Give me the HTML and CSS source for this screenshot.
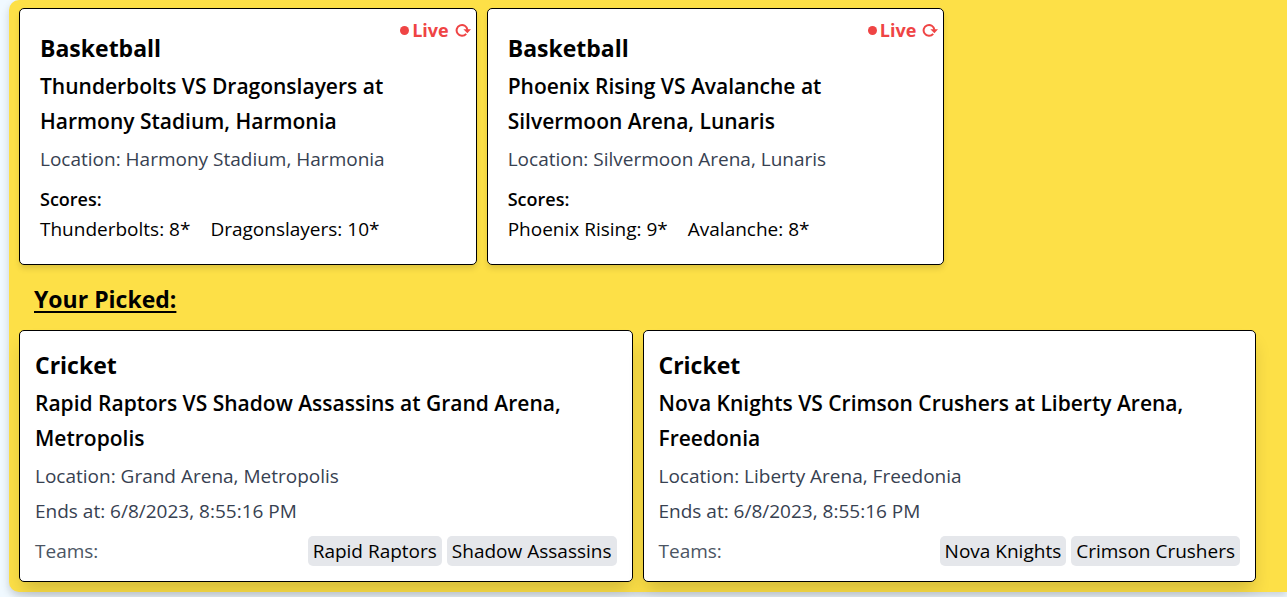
FILE: index.html
```html
<!DOCTYPE html>
<html lang="en">
<head>
<meta charset="utf-8">
<meta name="viewport" content="width=device-width, initial-scale=1">
<title>Matches</title>
<link rel="stylesheet" href="styles.css">
</head>
<body>
<main class="panel">
  <section class="live-list">
    <article class="card live-card">
      <p class="live"><span class="dot"></span>Live
        <button class="refresh" type="button" aria-label="Refresh score"><svg viewBox="0 0 16 14"><path d="M11.2 10.8A5.4 5.4 0 1 1 12.4 6.8"/><path class="head" d="M8.4 6.2H16l-3.6 4z"/></svg></button></p>
      <h2 class="sport">Basketball</h2>
      <h3 class="title">Thunderbolts VS Dragonslayers at Harmony Stadium, Harmonia</h3>
      <p class="meta">Location: Harmony Stadium, Harmonia</p>
      <h4 class="scores-label">Scores:</h4>
      <div class="scores"><span>Thunderbolts: 8*</span><span>Dragonslayers: 10*</span></div>
    </article>
    <article class="card live-card">
      <p class="live"><span class="dot"></span>Live
        <button class="refresh" type="button" aria-label="Refresh score"><svg viewBox="0 0 16 14"><path d="M11.2 10.8A5.4 5.4 0 1 1 12.4 6.8"/><path class="head" d="M8.4 6.2H16l-3.6 4z"/></svg></button></p>
      <h2 class="sport">Basketball</h2>
      <h3 class="title">Phoenix Rising VS Avalanche at Silvermoon Arena, Lunaris</h3>
      <p class="meta">Location: Silvermoon Arena, Lunaris</p>
      <h4 class="scores-label">Scores:</h4>
      <div class="scores"><span>Phoenix Rising: 9*</span><span>Avalanche: 8*</span></div>
    </article>
  </section>
  <h2 class="section-title">Your Picked:</h2>
  <section class="picked-list">
    <article class="card picked-card">
      <h2 class="sport">Cricket</h2>
      <h3 class="title">Rapid Raptors VS Shadow Assassins at Grand Arena, Metropolis</h3>
      <p class="meta">Location: Grand Arena, Metropolis</p>
      <p class="meta">Ends at: 6/8/2023, 8:55:16 PM</p>
      <div class="teams"><span class="teams-label">Teams:</span><span class="team">Rapid Raptors</span><span class="team">Shadow Assassins</span></div>
    </article>
    <article class="card picked-card">
      <h2 class="sport">Cricket</h2>
      <h3 class="title">Nova Knights VS Crimson Crushers at Liberty Arena, Freedonia</h3>
      <p class="meta">Location: Liberty Arena, Freedonia</p>
      <p class="meta">Ends at: 6/8/2023, 8:55:16 PM</p>
      <div class="teams"><span class="teams-label">Teams:</span><span class="team">Nova Knights</span><span class="team">Crimson Crushers</span></div>
    </article>
  </section>
</main>
</body>
</html>
```

FILE: styles.css
```css
* { box-sizing: border-box; }
body {
  margin: 0;
  padding: 0 0 5px 9px;
  background: #f0f9ff;
  color: #000;
  font: 19px/30px "Segoe UI", "Open Sans", "Noto Sans", sans-serif;
}
h2, h3, h4, p { margin: 0; }
.panel {
  padding: 8px 31px 10px 10px;
  background: #fde047;
  border-radius: 10px 0 0 10px;
  box-shadow: 0 4px 8px rgba(0, 0, 0, .16);
}
.live-list { display: grid; grid-template-columns: repeat(2, 37%); gap: 10px; }
.picked-list { display: grid; grid-template-columns: repeat(2, 1fr); gap: 10px; }
.card {
  background: #fff;
  border: 1px solid #000;
  border-radius: 5px;
}
.live-card {
  position: relative;
  padding: 20px;
  box-shadow: 0 4px 6px -1px rgba(0, 0, 0, .15);
}
.picked-card {
  padding: 15px;
  box-shadow: 0 12px 18px -3px rgba(0, 0, 0, .16);
}
.live {
  position: absolute;
  top: 6px;
  right: 5px;
  display: flex;
  align-items: center;
  color: #ef4444;
  font-size: 18px;
  font-weight: 700;
}
.dot { width: 9px; height: 9px; margin-right: 3px; border-radius: 50%; background: currentColor; }
.refresh {
  display: flex;
  margin-left: 6px;
  padding: 0;
  border: 0;
  background: none;
  color: inherit;
}
.refresh svg { width: 16px; height: 14px; fill: none; stroke: currentColor; stroke-width: 2; }
.refresh .head { fill: currentColor; stroke: none; }
.sport { margin-bottom: 2px; font-size: 23px; line-height: 38px; font-weight: 700; }
.title { margin-bottom: 5px; font-size: 21px; line-height: 35px; font-weight: 600; }
.meta { margin-bottom: 5px; color: #374151; }
.scores-label { margin-top: 10px; font-size: 18px; line-height: 30px; font-weight: 600; }
.scores { display: flex; gap: 20px; }
.section-title {
  margin: 15px 15px 12px;
  font-size: 23px;
  line-height: 38px;
  font-weight: 700;
  text-decoration: underline;
  text-decoration-thickness: 2px;
  text-underline-offset: 3px;
}
.teams { display: flex; gap: 5px; margin-top: 10px; }
.teams-label { margin-right: auto; color: #4b5563; }
.team { padding: 0 5px; border-radius: 5px; background: #e5e7eb; }
```
